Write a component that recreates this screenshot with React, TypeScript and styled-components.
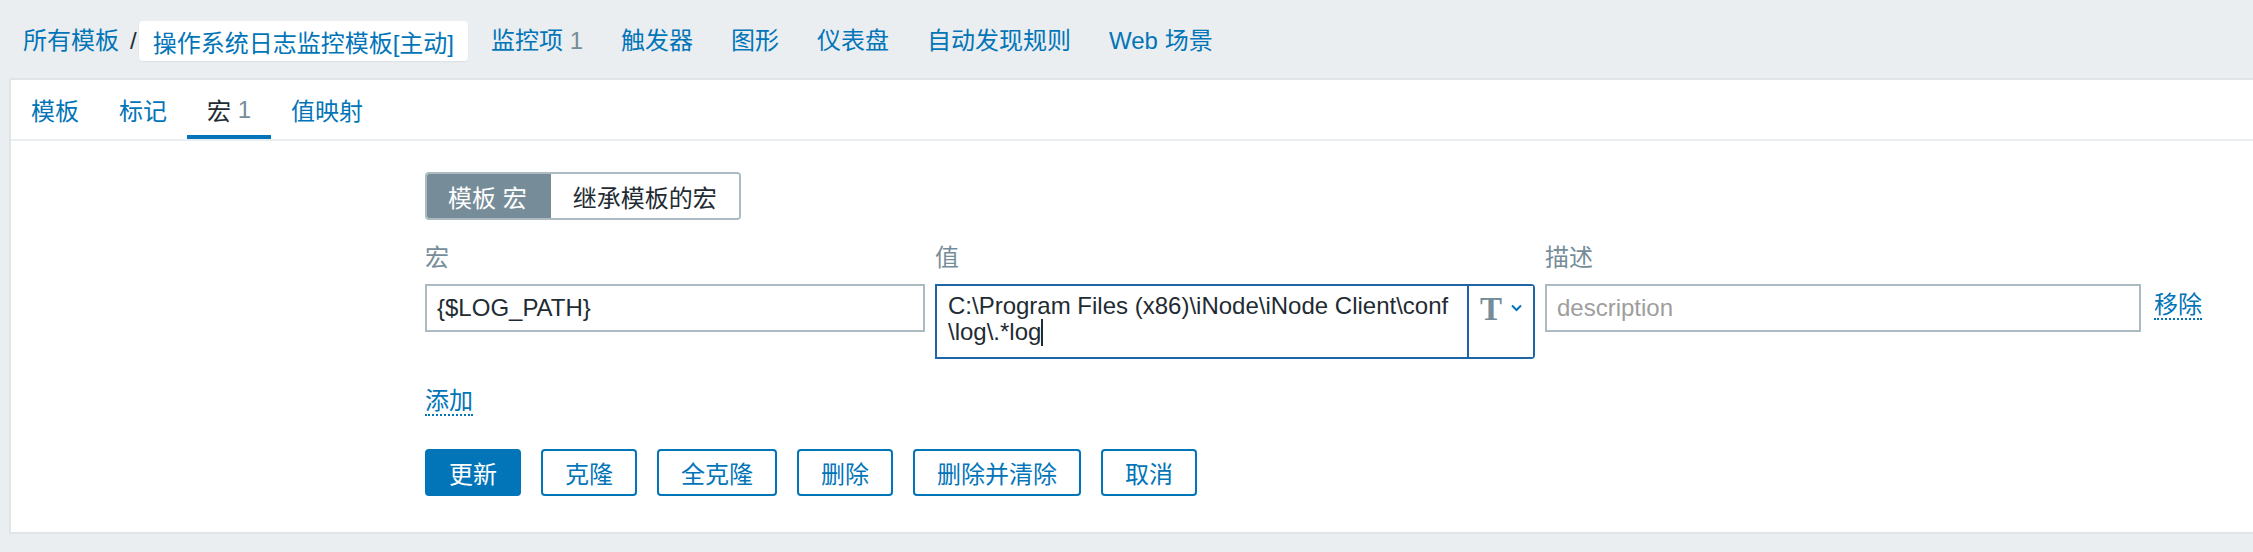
import React from "react";
import styled, { createGlobalStyle } from "styled-components";

const GlobalStyle = createGlobalStyle`
  html, body {
    margin: 0;
    padding: 0;
    background: #ebeef0;
    overflow: hidden;
  }
  body {
    font-family: "Liberation Sans", Arial, "Noto Sans CJK SC", sans-serif;
    font-size: 24px;
    color: #1f2c33;
  }
  * { box-sizing: border-box; }
`;

const Page = styled.div`
  width: 2253px;
  height: 552px;
  display: flex;
  flex-direction: column;
`;

/* ---------- top breadcrumb / navigation ---------- */

const Header = styled.nav`
  height: 78px;
  display: flex;
  align-items: center;
  padding: 4px 0 0 23px;
`;

const Crumb = styled.a`
  color: #0275b8;
  text-decoration: none;
  line-height: 28px;
`;

const CrumbSep = styled.span`
  color: #1f2c33;
  margin: 0 2px 0 11px;
  line-height: 28px;
`;

const CrumbCurrent = styled.span`
  height: 40px;
  display: inline-flex;
  align-items: center;
  padding: 0 14px;
  background: #ffffff;
  border-radius: 4px;
  color: #0275b8;
  margin-right: 4px;
  box-shadow: 0 1px 2px rgba(0, 0, 0, 0.06);
`;

const NavItem = styled.a`
  color: #0275b8;
  text-decoration: none;
  padding: 0 19px;
  line-height: 28px;
  white-space: nowrap;
`;

const Count = styled.span`
  color: #768d99;
`;

/* ---------- main panel ---------- */

const Panel = styled.section`
  margin: 0 -10px 0 9px;
  height: 456px;
  background: #ffffff;
  border: 2px solid #dfe4e7;
  display: flex;
  flex-direction: column;
`;

const TabBar = styled.ul`
  list-style: none;
  margin: 0;
  padding: 0;
  height: 61px;
  display: flex;
  border-bottom: 2px solid #ebeef0;
`;

const Tab = styled.li<{ $active?: boolean }>`
  padding: 4px 20px 0;
  display: flex;
  align-items: center;
  color: ${(p) => (p.$active ? "#1f2c33" : "#0275b8")};
  border-bottom: 4px solid ${(p) => (p.$active ? "#0275b8" : "transparent")};
  white-space: nowrap;
`;

const Body = styled.div`
  padding: 31px 0 0 414px;
  display: flex;
  flex-direction: column;
  align-items: flex-start;
`;

const Segmented = styled.div`
  display: flex;
  height: 48px;
  border: 2px solid #acbbc2;
  border-radius: 4px;
  overflow: hidden;
`;

const Segment = styled.span<{ $selected?: boolean }>`
  display: flex;
  align-items: center;
  padding: 0 ${(p) => (p.$selected ? "24px 0 23px" : "22px")};
  margin: ${(p) => (p.$selected ? "-2px 0 -2px -2px" : "0")};
  background: ${(p) => (p.$selected ? "#768d99" : "#ffffff")};
  color: ${(p) => (p.$selected ? "#ffffff" : "#1f2c33")};
  white-space: nowrap;
`;

const MacroGrid = styled.div`
  margin-top: 24px;
  display: grid;
  grid-template-columns: 500px 600px 596px auto;
  column-gap: 10px;
  row-gap: 12px;
  align-items: start;
`;

const ColLabel = styled.div`
  color: #768d99;
  line-height: 28px;
`;

const TextInput = styled.input`
  display: block;
  width: 100%;
  height: 48px;
  border: 2px solid #acbbc2;
  border-radius: 0;
  padding: 0 10px;
  font: inherit;
  font-size: 24px;
  color: #1f2c33;
  background: #ffffff;
  outline: none;
  &::placeholder {
    color: #9e9e9e;
  }
`;

const ValueBox = styled.div`
  display: flex;
  height: 75px;
  border: 2px solid #1f65a6;
  border-radius: 0 4px 4px 0;
`;

const ValueText = styled.div`
  flex: 1;
  padding: 7px 11px 0 11px;
  line-height: 26px;
  color: #1f2c33;
  white-space: nowrap;
`;

const Caret = styled.span`
  display: inline-block;
  width: 2px;
  height: 27px;
  background: #1f2c33;
  vertical-align: -6px;
`;

const TypeButton = styled.button`
  width: 66px;
  border: none;
  border-left: 2px solid #1f65a6;
  background: #ffffff;
  display: flex;
  align-items: flex-start;
  padding: 8px 0 0 11px;
  gap: 9px;
  cursor: pointer;
`;

const TypeGlyph = styled.span`
  font-family: "Liberation Serif", "Times New Roman", serif;
  font-weight: bold;
  font-size: 33px;
  line-height: 30px;
  color: #768d99;
`;

const Chevron = styled.svg`
  margin-top: 10px;
`;

const LinkAction = styled.a`
  color: #0275b8;
  text-decoration: none;
  border-bottom: 2px dotted #0275b8;
  line-height: 26px;
  white-space: nowrap;
`;

const RemoveLink = styled(LinkAction)`
  margin: 8px 0 0 3px;
  justify-self: start;
`;

const AddLink = styled(LinkAction)`
  margin-top: 29px;
`;

const ButtonRow = styled.div`
  margin-top: 33px;
  display: flex;
  gap: 20px;
`;

const Button = styled.button<{ $primary?: boolean }>`
  height: 47px;
  padding: 0 22px;
  font: inherit;
  font-size: 24px;
  border-radius: 4px;
  border: 2px solid #0275b8;
  background: ${(p) => (p.$primary ? "#0275b8" : "#ffffff")};
  color: ${(p) => (p.$primary ? "#ffffff" : "#0275b8")};
  white-space: nowrap;
  cursor: pointer;
`;

const navItems: { label: string; count?: number }[] = [
  { label: "监控项", count: 1 },
  { label: "触发器" },
  { label: "图形" },
  { label: "仪表盘" },
  { label: "自动发现规则" },
  { label: "Web 场景" },
];

const tabs: { label: string; count?: number; active?: boolean }[] = [
  { label: "模板" },
  { label: "标记" },
  { label: "宏", count: 1, active: true },
  { label: "值映射" },
];

const actions = ["更新", "克隆", "全克隆", "删除", "删除并清除", "取消"];

export default function App() {
  return (
    <>
      <GlobalStyle />
      <Page>
        <Header>
          <Crumb href="#">所有模板</Crumb>
          <CrumbSep>/</CrumbSep>
          <CrumbCurrent>操作系统日志监控模板[主动]</CrumbCurrent>
          {navItems.map((n) => (
            <NavItem key={n.label} href="#">
              {n.label}
              {n.count !== undefined && <Count> {n.count}</Count>}
            </NavItem>
          ))}
        </Header>

        <Panel>
          <TabBar>
            {tabs.map((t) => (
              <Tab key={t.label} $active={t.active}>
                {t.label}
                {t.count !== undefined && <Count>&nbsp;{t.count}</Count>}
              </Tab>
            ))}
          </TabBar>

          <Body>
            <Segmented>
              <Segment $selected>模板 宏</Segment>
              <Segment>继承模板的宏</Segment>
            </Segmented>

            <MacroGrid>
              <ColLabel>宏</ColLabel>
              <ColLabel>值</ColLabel>
              <ColLabel>描述</ColLabel>
              <span />

              <TextInput defaultValue="{$LOG_PATH}" />
              <ValueBox>
                <ValueText>
                  C:\Program Files (x86)\iNode\iNode Client\conf
                  <br />
                  \log\.*log
                  <Caret />
                </ValueText>
                <TypeButton type="button">
                  <TypeGlyph>T</TypeGlyph>
                  <Chevron width="11" height="8" viewBox="0 0 11 8">
                    <path d="M1 1.5 L5.5 6 L10 1.5" fill="none" stroke="#0275b8" strokeWidth="2" />
                  </Chevron>
                </TypeButton>
              </ValueBox>
              <TextInput placeholder="description" />
              <RemoveLink href="#">移除</RemoveLink>
            </MacroGrid>

            <AddLink href="#">添加</AddLink>

            <ButtonRow>
              {actions.map((a, i) => (
                <Button key={a} $primary={i === 0}>
                  {a}
                </Button>
              ))}
            </ButtonRow>
          </Body>
        </Panel>
      </Page>
    </>
  );
}
